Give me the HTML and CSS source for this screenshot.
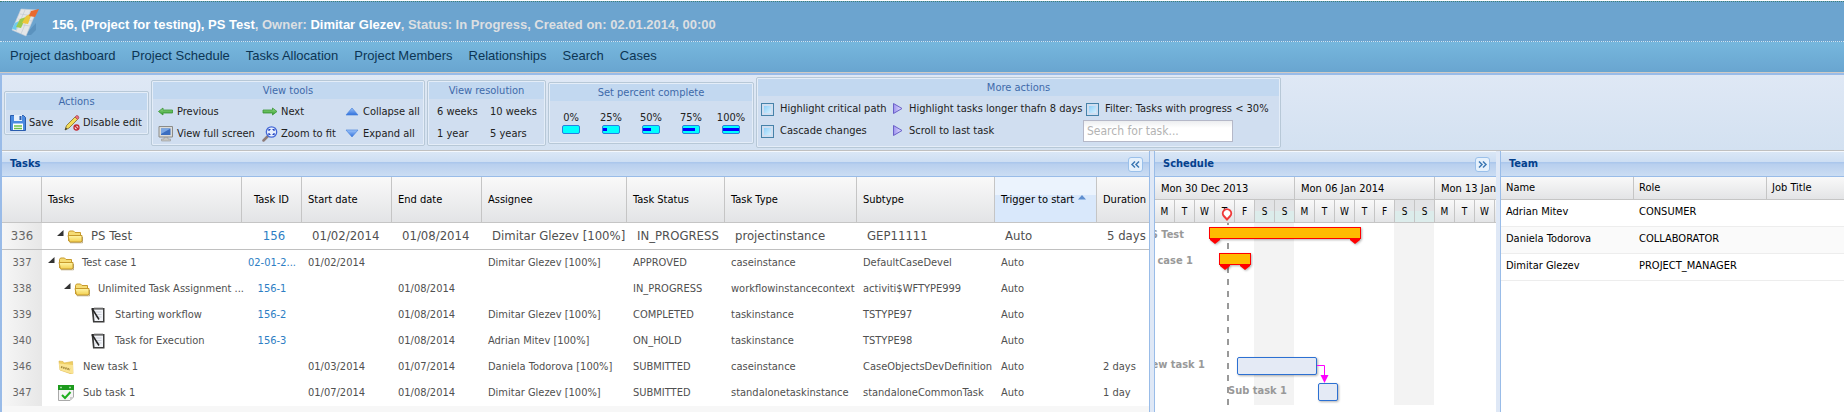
FILE: index.html
```html
<!DOCTYPE html>
<html lang="en">
<head>
<meta charset="utf-8">
<title>Project Schedule</title>
<link rel="stylesheet" href="styles.css">
</head>
<body>
<svg class="defs" width="0" height="0" aria-hidden="true">
  <defs>
    <linearGradient id="gFolder" x1="0" y1="0" x2="0" y2="1"><stop offset="0" stop-color="#fff6a8"/><stop offset="1" stop-color="#f3cf4e"/></linearGradient>
    <linearGradient id="gBlue" x1="0" y1="0" x2="0" y2="1"><stop offset="0" stop-color="#9cc4fa"/><stop offset="1" stop-color="#2f6fdc"/></linearGradient>
    <linearGradient id="gGreen" x1="0" y1="0" x2="0" y2="1"><stop offset="0" stop-color="#9be08a"/><stop offset="1" stop-color="#2f9a2c"/></linearGradient>
    <linearGradient id="gViolet" x1="0" y1="0" x2="1" y2="0"><stop offset="0" stop-color="#9d93ee"/><stop offset="1" stop-color="#e6e2ff"/></linearGradient>
    <symbol id="folder" viewBox="0 0 16 16">
      <path d="M1.500 13V4.500l1-1.500h4l1.500 1.500h5.500V7" fill="#f6dc74" stroke="#c79a2c"/>
      <path d="M3 7.500H1l1.500 6.500h11.500l1-1V7.500z" fill="url(#gFolder)" stroke="#c79a2c"/>
      <path d="M3 14.800h12.500V9" fill="none" stroke="#8a6a1c" stroke-opacity=".5"/>
    </symbol>
    <symbol id="note" viewBox="0 0 16 16">
      <path d="M1.500 1h13v14.500H3z" fill="#3c3c3c"/>
      <path d="M3.500 2.500h9.500v11.500h-8.500z" fill="#f2f4f8"/>
      <path d="M5 5h6.500M5 7.500h6.500M5 10h6.500" stroke="#c3c8d2" stroke-width=".8"/>
      <path d="M2 1.500 9 12.500" stroke="#222" stroke-width="1.500"/>
      <path d="M4 1h9" stroke="#9a9a9a"/>
    </symbol>
    <symbol id="case" viewBox="0 0 16 16">
      <path d="M1 2l4 .5 1 1.500 8.500-1.500.5 12-3 0L2 11z" fill="#efcf63" stroke="#dcb445" stroke-width=".6"/>
      <path d="M1 4.500l14 1.500v9L2 11z" fill="#fae493"/>
      <path d="M3 8l9 2.500" stroke="#a5893c" stroke-width="2" stroke-dasharray="1.500 .7"/>
    </symbol>
    <symbol id="task" viewBox="0 0 16 16">
      <path d="M.5 1h15v11l-3.500 3.500H.5z" fill="#f5f5f5" stroke="#a9a9a9"/>
      <path d="M0 0h16v5H0z" fill="#1d9a1d"/>
      <path d="M2 2.500h2M11 2.500h2" stroke="#9fe09f" stroke-width="1.500"/>
      <path d="M4 10l3 3 5.500-6" fill="none" stroke="#1fae1f" stroke-width="2"/>
      <path d="M12 15.500V12h3.500z" fill="#ccc"/>
    </symbol>
    <symbol id="twist" viewBox="0 0 10 10"><path d="M6.500 1v6H0z" fill="#333"/></symbol>
    <symbol id="tri" viewBox="0 0 16 16"><path d="M3.500 2.500 12 7.500 3.500 12.500z" fill="url(#gViolet)" stroke="#6a60c8"/></symbol>
  </defs>
</svg>

<header class="title">
  <svg class="logo" viewBox="0 0 30 30" aria-hidden="true">
    <path d="M14 28 25 16v7l-5 5z" fill="#4a7fae" opacity=".5"/>
    <path d="M10 2 26 3 15 29 1 23z" fill="#e4e6e8" stroke="#c4cdd6" stroke-width=".6"/>
    <path d="M9 7 23 9M7 12l14 2M5 17l14 2M14 3 5 24M20 3 10 27" stroke="#c2cad2" stroke-width=".7"/>
    <path d="M4 16l4-2-3 9-4-1z" fill="#6ecbee"/>
    <path d="M9 12l6-2-5 11-5-1z" fill="#9bcb4e"/>
    <path d="M15 9l6-3-4 11-6-1z" fill="#edc63d"/>
    <path d="M20 4l8-2-4 8-6-1z" fill="#ea6a2e"/>
  </svg>
  <h1><b>156, (Project for testing), PS Test</b>, Owner: <b>Dimitar Glezev</b>, Status: In Progress, Created on: 02.01.2014, 00:00</h1>
</header>

<nav class="nav">
  <a href="#">Project dashboard</a><a href="#">Project Schedule</a><a href="#">Tasks Allocation</a><a href="#">Project Members</a><a href="#">Relationships</a><a href="#">Search</a><a href="#">Cases</a>
</nav>

<main class="app">
  <section class="toolbar">
    <div class="group">
      <h2>Actions</h2>
      <div class="tools actions">
        <button><svg viewBox="0 0 16 16"><path d="M.5 .5h13l2 2v13H.5z" fill="#4a8ae0" stroke="#2a5cae"/><path d="M4 0h8v6H4z" fill="#e8f0fb"/><path d="M9.500 1h2v4h-2z" fill="#2a5cae"/><path d="M3 8.500h10V15H3z" fill="#fff"/><path d="M4 11h8M4 13.500h8" stroke="#6cc04a" stroke-width="1.500"/></svg>Save</button>
        <button><svg viewBox="0 0 16 16"><path d="M1 15l1.500-4.500L11 2l2.500 2.500L5 13z" fill="#f3dc58" stroke="#7d6a2a" stroke-width=".8"/><path d="M11 2l1.500-1.500q2-.5 2.500 2.500L13.500 4.500z" fill="#e8707a" stroke="#a84650" stroke-width=".7"/><path d="M1 15l.8-2.500 1.600 1.600z" fill="#333"/><circle cx="12.500" cy="12.500" r="2.500" fill="#f7dada" stroke="#c22c34" stroke-width="1.300"/><path d="M11 11l3 3" stroke="#c22c34" stroke-width="1.300"/></svg>Disable edit</button>
      </div>
    </div>
    <div class="group">
      <h2>View tools</h2>
      <div class="tools view">
        <button><svg viewBox="0 0 16 16"><path d="M.5 7.500 5 4v2h9.500v3H5v2z" fill="url(#gGreen)" stroke="#3a9636" stroke-width=".8"/></svg>Previous</button>
        <button><svg viewBox="0 0 16 16"><path d="M15 7.500 10.500 4v2H1v3h9.500v2z" fill="url(#gGreen)" stroke="#3a9636" stroke-width=".8"/></svg>Next</button>
        <button><svg viewBox="0 0 16 16"><path d="M8 4 14 11H2z" fill="url(#gBlue)" stroke="#4f86dc" stroke-width=".7"/></svg>Collapse all</button>
        <button><svg viewBox="0 0 16 16"><path d="M1 .5h13.500v10.500H1z" fill="#dcdcd8" stroke="#8b8b88"/><path d="M3 2.500h9.500V9H3z" fill="#3b6ec0"/><path d="M3 2.500h9.500L3 8z" fill="#7ba7e4"/><path d="M6 11.500h4V13h2.500v2h-9v-2H6z" fill="#c6c6c2" stroke="#999" stroke-width=".6"/></svg>View full screen</button>
        <button><svg viewBox="0 0 16 16"><path d="M6 10 1.500 14.500" stroke="#8e7c78" stroke-width="2.500" stroke-linecap="round"/><circle cx="9.500" cy="6" r="5.200" fill="#e6eefc" stroke="#4468d6" stroke-width="1.300"/><path d="M7 5V3.500h1.500M10.500 3.500H12V5M12 7v1.500h-1.500M8.500 8.500H7V7" fill="none" stroke="#1d3fc0" stroke-width="1.200"/></svg>Zoom to fit</button>
        <button><svg viewBox="0 0 16 16"><path d="M8 11 14 4H2z" fill="url(#gBlue)" stroke="#4f86dc" stroke-width=".7"/></svg>Expand all</button>
      </div>
    </div>
    <div class="group">
      <h2>View resolution</h2>
      <div class="tools resolution">
        <button>6 weeks</button><button>10 weeks</button><button>1 year</button><button>5 years</button>
      </div>
    </div>
    <div class="group">
      <h2>Set percent complete</h2>
      <div class="percents">
        <button>0%<i class="bar"></i></button>
        <button>25%<i class="bar"><i class="fill" style="width:25%"></i></i></button>
        <button>50%<i class="bar"><i class="fill" style="width:50%"></i></i></button>
        <button>75%<i class="bar"><i class="fill" style="width:75%"></i></i></button>
        <button>100%<i class="bar"><i class="fill" style="width:100%"></i></i></button>
      </div>
    </div>
    <div class="group">
      <h2>More actions</h2>
      <div class="tools more">
        <label><input type="checkbox">Highlight critical path</label>
        <button><svg viewBox="0 0 16 16"><use href="#tri"/></svg>Highlight tasks longer thafn 8 days</button>
        <label class="filter"><input type="checkbox">Filter: Tasks with progress &lt; 30%</label>
        <label><input type="checkbox">Cascade changes</label>
        <button><svg viewBox="0 0 16 16"><use href="#tri"/></svg>Scroll to last task</button>
        <input class="search" type="text" aria-label="Search for task" placeholder="Search for task...">
      </div>
    </div>
  </section>

  <div class="panels">
    <section class="panel tasks">
      <div class="head"><h2>Tasks</h2><button class="collapse" aria-label="Collapse tasks"><svg viewBox="0 0 13 13"><path d="M6 3.500 3 6.500l3 3M10 3.500l-3 3 3 3" fill="none" stroke="#3c78b4" stroke-width="1.500"/></svg></button></div>
      <table class="grid">
        <colgroup><col class="w-num"><col class="w-name"><col class="w-id"><col class="w-date"><col class="w-date"><col class="w-who"><col class="w-status"><col class="w-type"><col class="w-sub"><col class="w-trig"><col class="w-dur"></colgroup>
        <thead><tr><th></th><th>Tasks</th><th class="id">Task ID</th><th>Start date</th><th>End date</th><th>Assignee</th><th>Task Status</th><th>Task Type</th><th>Subtype</th><th class="sorted">Trigger to start<svg viewBox="0 0 8 5"><path d="M4 0 8 4.500H0z" fill="#5f8fd0"/></svg></th><th>Duration</th></tr></thead>
        <tbody>
          <tr class="project"><td class="num">336</td><td><div class="node lvl-1"><svg class="twist" viewBox="0 0 10 10"><use href="#twist"/></svg><svg class="icon" viewBox="0 0 16 16"><use href="#folder"/></svg>PS Test</div></td><td class="id"><a href="#">156</a></td><td>01/02/2014</td><td>01/08/2014</td><td>Dimitar Glezev [100%]</td><td>IN_PROGRESS</td><td>projectinstance</td><td>GEP11111</td><td>Auto</td><td>5 days</td></tr>
          <tr><td class="num">337</td><td><div class="node"><svg class="twist" viewBox="0 0 10 10"><use href="#twist"/></svg><svg class="icon" viewBox="0 0 16 16"><use href="#folder"/></svg>Test case 1</div></td><td class="id"><a href="#">02-01-2...</a></td><td>01/02/2014</td><td></td><td>Dimitar Glezev [100%]</td><td>APPROVED</td><td>caseinstance</td><td>DefaultCaseDevel</td><td>Auto</td><td></td></tr>
          <tr><td class="num">338</td><td><div class="node lvl-2"><svg class="twist" viewBox="0 0 10 10"><use href="#twist"/></svg><svg class="icon" viewBox="0 0 16 16"><use href="#folder"/></svg>Unlimited Task Assignment ...</div></td><td class="id"><a href="#">156-1</a></td><td></td><td>01/08/2014</td><td></td><td>IN_PROGRESS</td><td>workflowinstancecontext</td><td>activiti$WFTYPE999</td><td>Auto</td><td></td></tr>
          <tr><td class="num">339</td><td><div class="node leaf lvl-3"><svg class="icon" viewBox="0 0 16 16"><use href="#note"/></svg>Starting workflow</div></td><td class="id"><a href="#">156-2</a></td><td></td><td>01/08/2014</td><td>Dimitar Glezev [100%]</td><td>COMPLETED</td><td>taskinstance</td><td>TSTYPE97</td><td>Auto</td><td></td></tr>
          <tr><td class="num">340</td><td><div class="node leaf lvl-3"><svg class="icon" viewBox="0 0 16 16"><use href="#note"/></svg>Task for Execution</div></td><td class="id"><a href="#">156-3</a></td><td></td><td>01/08/2014</td><td>Adrian Mitev [100%]</td><td>ON_HOLD</td><td>taskinstance</td><td>TSTYPE98</td><td>Auto</td><td></td></tr>
          <tr><td class="num">346</td><td><div class="node leaf"><svg class="icon" viewBox="0 0 16 16"><use href="#case"/></svg>New task 1</div></td><td></td><td>01/03/2014</td><td>01/07/2014</td><td>Daniela Todorova [100%]</td><td>SUBMITTED</td><td>caseinstance</td><td>CaseObjectsDevDefinition</td><td>Auto</td><td>2 days</td></tr>
          <tr><td class="num">347</td><td><div class="node leaf"><svg class="icon" viewBox="0 0 16 16"><use href="#task"/></svg>Sub task 1</div></td><td></td><td>01/07/2014</td><td>01/08/2014</td><td>Dimitar Glezev [100%]</td><td>SUBMITTED</td><td>standalonetaskinstance</td><td>standaloneCommonTask</td><td>Auto</td><td>1 day</td></tr>
        </tbody>
      </table>
    </section>

    <section class="panel schedule">
      <div class="head"><h2>Schedule</h2><button class="collapse" aria-label="Collapse schedule"><svg viewBox="0 0 13 13"><path d="M3 3.500l3 3-3 3M7 3.500l3 3-3 3" fill="none" stroke="#3c78b4" stroke-width="1.500"/></svg></button></div>
      <div class="weeks">
        <div class="week"><div class="label">Mon 30 Dec 2013</div><div class="days"><span>M</span><span>T</span><span>W</span><span class="today">T<svg viewBox="0 0 12 14"><path d="M6 12.500 3 9.300a4.200 4.200 0 1 1 6 0z" fill="#fff" stroke="#f03a3a" stroke-width="2"/></svg></span><span>F</span><span class="off">S</span><span class="off">S</span></div></div>
        <div class="week"><div class="label">Mon 06 Jan 2014</div><div class="days"><span>M</span><span>T</span><span>W</span><span>T</span><span>F</span><span class="off">S</span><span class="off">S</span></div></div>
        <div class="week"><div class="label">Mon 13 Jan</div><div class="days"><span>M</span><span>T</span><span>W</span><span></span></div></div>
      </div>
      <svg class="gantt" width="420" height="182">
        <path d="M99 0h40v182H99zM239 0h40v182h-40z" fill="#f3f3f3"/>
        <path d="M73 0v182" stroke="#999" stroke-width="2" stroke-dasharray="6 6" stroke-dashoffset="4"/>
        <g class="shadow">
          <path d="M55 16h10v1l-5 4-5-4zM195 16h10v1l-5 4-5-4zM65 42h10v1l-5 4-5-4zM85 42h10v1l-5 4-5-4z" fill="#f00"/>
          <rect x="54.500" y="4.500" width="151" height="11" fill="#fb0" stroke="#f00"/>
          <rect x="64.500" y="30.500" width="31" height="11" fill="#fb0" stroke="#f00"/>
          <rect x="82.500" y="134.500" width="79" height="17" rx="1.500" fill="#e4eaf5" stroke="#2c70d2"/>
          <rect x="163.500" y="160.500" width="19" height="17" rx="1.500" fill="#e4eaf5" stroke="#2c70d2"/>
        </g>
        <path d="M162 142.500h7.500V153" fill="none" stroke="#f0f"/>
        <path d="M165.500 152h8l-4 8z" fill="#f0f"/>
        <g class="names">
          <text x="29" y="15">PS Test</text>
          <text x="38" y="41">Test case 1</text>
          <text x="50" y="145">New task 1</text>
          <text x="132" y="171">Sub task 1</text>
        </g>
      </svg>
    </section>

    <section class="panel team">
      <div class="head"><h2>Team</h2></div>
      <table class="members">
        <thead><tr><th>Name</th><th>Role</th><th>Job Title</th></tr></thead>
        <tbody>
          <tr><td>Adrian Mitev</td><td>CONSUMER</td><td></td></tr>
          <tr><td>Daniela Todorova</td><td>COLLABORATOR</td><td></td></tr>
          <tr><td>Dimitar Glezev</td><td>PROJECT_MANAGER</td><td></td></tr>
        </tbody>
      </table>
    </section>
  </div>
</main>
</body>
</html>
```
FILE: styles.css
```css
* { box-sizing: border-box; }

html { height: 100%; }

body {
  display: flex;
  flex-direction: column;
  min-height: 100%;
  margin: 0;
  overflow: hidden;
  font: 11px/14px "DejaVu Sans Condensed", "Open Sans", sans-serif;
  color: #222;
  background: #fff;
}

h1, h2 { margin: 0; font-weight: normal; }
h2 { font-size: 11px; line-height: 14px; }
a { text-decoration: none; }
button { padding: 0; border: 0; background: none; font: inherit; color: inherit; cursor: pointer; }
svg { display: block; flex: none; }
.defs { position: absolute; }

/* Header */
.title {
  display: flex;
  align-items: center;
  gap: 11px;
  height: 41px;
  margin-top: 1px;
  padding: 0 10px 0 11px;
  border-top: 1px dotted #3f7f76;
  border-bottom: 1px dotted #cfe4f2;
  background: #6ca4cf;
}
.logo { width: 30px; height: 30px; }
.title h1 { font: bold 13px/18px "Liberation Sans", sans-serif; color: #dcdfe2; padding-top: 6px; }
.title b { color: #fff; }

.nav {
  display: flex;
  align-items: center;
  gap: 16px;
  height: 31px;
  padding: 0 10px 2px;
  border-bottom: 1px solid #4a86b4;
  background: linear-gradient(#76b7dd, #69a5d0);
  font: 13px/18px "Liberation Sans", sans-serif;
}
.nav a { color: #0c3554; }

/* Toolbar */
.app {
  display: flex;
  flex: 1;
  flex-direction: column;
  border-top: 2px solid #99bbe8;
  border-left: 2px solid #99bbe8;
  box-shadow: 0 -1px #cfcac4;
}
.toolbar {
  display: flex;
  align-items: center;
  gap: 2px;
  height: 76px;
  padding: 0 2px;
  border-bottom: 1px solid #c0c0c0;
  background: linear-gradient(#dfe8f5, #d3e1f1);
}
.group {
  padding: 1px;
  border: 1px solid #b7c8d7;
  border-radius: 2px;
  background: #e4edf8;
}
.group h2 {
  height: 17px;
  line-height: 17px;
  text-align: center;
  color: #3e6aaa;
  background: #c2d8f0;
}
.tools { display: grid; grid-auto-rows: 20px; row-gap: 2px; align-items: center; padding-top: 3px; background: #d0def0; }
.tools button, .tools label { display: flex; align-items: center; gap: 3px; height: 20px; white-space: nowrap; }
.tools svg { width: 16px; height: 16px; }
.actions { grid-template-columns: 54px 83px; padding-left: 4px; }
.view { grid-template-columns: 104px 82px 79px; padding-left: 5px; }
.resolution { grid-template-columns: 53px 54px; padding-left: 8px; }
.percents {
  display: grid;
  grid-template-columns: repeat(5, 40px);
  padding: 10px 1px 8px 1px;
  background: #d0def0;
}
.percents button { display: flex; flex-direction: column; align-items: center; }
.bar {
  display: flex;
  align-items: center;
  width: 18px;
  height: 9px;
  border: 1px solid #2a7de0;
  border-radius: 2px;
  background: #0ff;
}
.fill { height: 3px; background: #00f; }
.more { grid-template-columns: 129px 193px 196px; padding: 3px 0 5px 3px; }
.more label { gap: 6px; }
.more .filter { padding-left: 3px; }
.more input[type="checkbox"] {
  appearance: none;
  flex: none;
  width: 13px;
  height: 13px;
  margin: 0;
  border: 1px solid #4682a9;
  background: linear-gradient(135deg, #7cc8f8, #e8f8ff);
  background-clip: content-box;
  background-color: #d9f1fe;
  padding: 2px;
}
.search {
  width: 150px;
  height: 22px;
  padding: 1px 3px;
  border: 1px solid #b5b8c8;
  background: linear-gradient(#eceef0, #fff 7px);
  font: inherit;
  font-size: 12px;
}
.search::placeholder { color: #b3b3b3; }

/* Panels */
.panels {
  display: grid;
  flex: 1;
  grid-template-columns: 1148fr 342fr 344fr;
  gap: 4px;
  background: #dfe8f6;
}
.panel { min-width: 0; overflow: hidden; background: #fff; }
.head {
  display: flex;
  align-items: center;
  justify-content: space-between;
  height: 26px;
  padding: 0 6px 0 8px;
  border-top: 1px solid #f4f8fd;
  border-bottom: 1px solid #99bce8;
  background: linear-gradient(#dae7f6, #cddef3 10px, #abc7ec 10px, #abc7ec 11px, #b8cfee 12px, #cbddf3);
}
.head h2 { font-weight: bold; color: #04408c; }
.collapse {
  width: 15px;
  height: 15px;
  border: 1px solid #9ac0ea;
  border-radius: 3px;
  background: #e6f1fc;
}
.collapse svg { width: 13px; height: 13px; }
.tasks { border-right: 1px solid #99bce8; background: #f7f7f7; }
.schedule, .team { border-left: 1px solid #99bce8; }

table { width: 100%; border-spacing: 0; table-layout: fixed; }
th {
  padding: 0 6px;
  border-right: 1px solid #c5c5c5;
  border-bottom: 1px solid #c5c5c5;
  background: linear-gradient(#f9f9f9, #e3e4e6);
  font-weight: normal;
  text-align: left;
  white-space: nowrap;
  color: #000;
}
th:last-child { border-right: 0; }
td { padding: 0 6px; white-space: nowrap; }

.w-num { width: 40px; }
.w-name { width: 200px; }
.w-id { width: 60px; }
.w-date { width: 90px; }
.w-who { width: 145px; }
.w-status { width: 98px; }
.w-type { width: 132px; }
.w-sub { width: 138px; }
.w-trig { width: 102px; }
.w-dur { width: 52px; }

.grid th { height: 46px; }
.grid th:last-child { padding-right: 0; }
.grid .id { padding: 0; text-align: center; }
.grid td { height: 26px; color: #505050; background: #fff; }
.grid td a { color: #2d7ec4; }
.grid .num {
  padding: 0;
  text-align: center;
  color: #666;
  background: linear-gradient(90deg, #f6f6f6, #e7e7e7);
}
.grid .sorted { background: linear-gradient(#ebf3fd 18px, #d9e8fb 18px); }
.grid .sorted svg { display: inline-block; width: 8px; height: 5px; margin: 0 0 3px 4px; }
.grid .project td { height: 27px; padding: 0 0 0 10px; border-bottom: 1px solid #c0c0c0; font-size: 13px; }
.grid .project .num { padding: 0; }
.grid .project .id { padding-left: 4px; }
.node { display: flex; align-items: center; }
.twist { width: 10px; height: 10px; margin-bottom: 4px; }
.icon { width: 16px; height: 16px; margin-right: 8px; }
.lvl-1 { padding-left: 5px; }
.lvl-2 { padding-left: 16px; }
.leaf { padding-left: 10px; }
.leaf .icon { margin-right: 9px; }
.lvl-3 { padding-left: 42px; }

/* Timeline */
.weeks { display: flex; }
.week { flex: 0 0 140px; color: #000; }
.label {
  height: 23px;
  padding: 0 6px;
  border-right: 1px solid #c5c5c5;
  border-bottom: 1px solid #c5c5c5;
  background: linear-gradient(#f9f9f9, #e3e4e6);
  line-height: 24px;
  white-space: nowrap;
}
.days { display: grid; grid-template-columns: repeat(7, 20px); }
.days span {
  height: 23px;
  border-right: 1px solid #c5c5c5;
  border-bottom: 1px solid #c5c5c5;
  background: linear-gradient(#f9f9f9, #e3e4e6);
  line-height: 24px;
  text-align: center;
  font-size: 10px;
}
.days .off { background: linear-gradient(#e2e3e5 11px, #dceceb 11px); }
.days .today { position: relative; }
.today svg { position: absolute; top: 7px; left: 6px; width: 12px; height: 14px; }
.shadow { filter: drop-shadow(1px 1px 1px rgba(0, 0, 0, .3)); }
.names text { fill: #999; font-weight: bold; text-anchor: end; }

/* Team */
.members th { height: 23px; }
.members th:nth-child(-n+2), .members td:nth-child(-n+2) { width: 133px; }
.members td { height: 27px; padding: 0 5px 2px; border-bottom: 1px solid #ededed; color: #000; }
.members th { padding: 0 5px; }
.members tr:nth-child(even) td { background: #fafafa; }
```
